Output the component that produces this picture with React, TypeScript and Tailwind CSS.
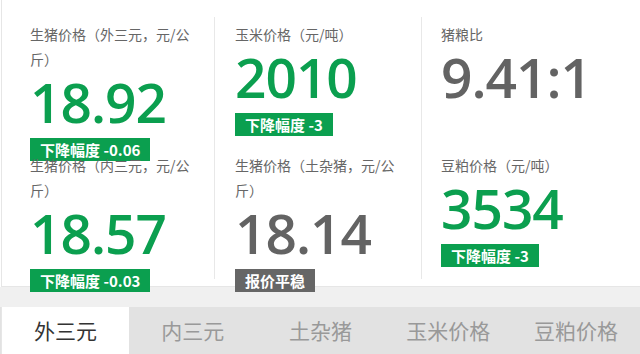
import React from "react";

type Cell = {
  label: string;
  value: string;
  tag?: string;
  trend: "down" | "flat" | "none";
};

const columns: Cell[][] = [
  [
    { label: "生猪价格（外三元，元/公斤）", value: "18.92", tag: "下降幅度 -0.06", trend: "down" },
    { label: "生猪价格（内三元，元/公斤）", value: "18.57", tag: "下降幅度 -0.03", trend: "down" },
  ],
  [
    { label: "玉米价格（元/吨）", value: "2010", tag: "下降幅度 -3", trend: "down" },
    { label: "生猪价格（土杂猪，元/公斤）", value: "18.14", tag: "报价平稳", trend: "flat" },
  ],
  [
    { label: "猪粮比", value: "9.41:1", trend: "none" },
    { label: "豆粕价格（元/吨）", value: "3534", tag: "下降幅度 -3", trend: "down" },
  ],
];

const tabs = ["外三元", "内三元", "土杂猪", "玉米价格", "豆粕价格"];

function PriceCell({ cell }: { cell: Cell }) {
  const green = cell.trend === "down";
  return (
    <div className="h-[131px] pt-[5px]">
      <p className="w-[166px] text-[14px] leading-[25px] text-[#666]">{cell.label}</p>
      <div
        className={
          "mt-[2px] text-[55px] leading-none font-semibold tracking-[-1px] font-['Open_Sans',sans-serif] " +
          (green ? "text-[#0b9f4f]" : "text-[#636363]")
        }
      >
        {cell.value}
      </div>
      {cell.tag && (
        <span
          className={
            "mt-[9px] inline-block h-[23px] px-[10px] text-[15px] leading-[23px] font-bold text-white " +
            (green ? "bg-[#0b9f4f]" : "bg-[#666]")
          }
        >
          {cell.tag}
        </span>
      )}
    </div>
  );
}

export default function App() {
  return (
    <div className="w-[640px] h-[354px] overflow-hidden bg-white font-['Noto_Sans_CJK_SC','Noto_Sans',sans-serif]">
      <div className="ml-[1px] h-[287px] border-l border-b border-[#e6e6e6] pt-[17px] flex">
        {columns.map((col, i) => (
          <div
            key={i}
            className={
              i === 0
                ? "w-[213px] pl-[28px] border-r border-[#e8e8e8] h-[262px]"
                : i === 1
                ? "w-[207px] pl-[20px] border-r border-[#e8e8e8] h-[262px]"
                : "flex-1 pl-[19px] h-[262px]"
            }
          >
            {col.map((cell, j) => (
              <PriceCell key={j} cell={cell} />
            ))}
          </div>
        ))}
      </div>
      <div className="h-[20px] bg-[#f0f0f0]" />
      <div className="flex h-[48px] bg-[#e2e2e2]">
        {tabs.map((t, i) => (
          <div
            key={t}
            className={
              "w-[128px] flex items-center justify-center text-[21px] " +
              (i === 0 ? "ml-[1px] border-l border-[#e6e6e6] bg-white text-[#333]" : "text-[#999]")
            }
          >
            {t}
          </div>
        ))}
      </div>
    </div>
  );
}
